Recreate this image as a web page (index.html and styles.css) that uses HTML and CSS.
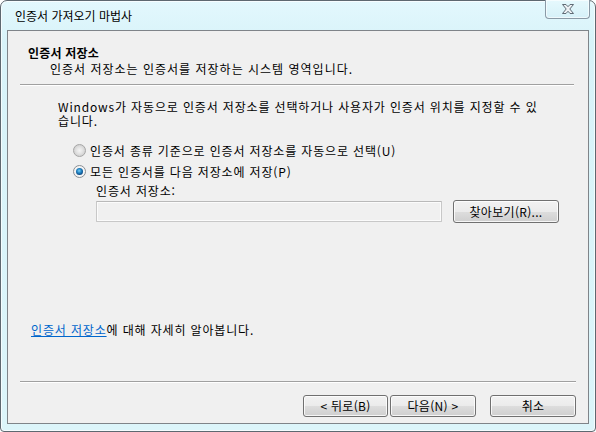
FILE: index.html
```html
<!DOCTYPE html>
<html lang="ko">
<head>
<meta charset="utf-8">
<link rel="stylesheet" href="styles.css">
</head>
<body>
<div class="window">
  <div class="titlebar">
    <span class="title">인증서 가져오기 마법사</span>
    <div class="close">
      <svg width="16" height="12" viewBox="0 0 16 12"><path d="M2.5 1.5h3.5l2 2.2 2-2.2h3.5l-3.7 4.5 3.7 4.5h-3.5l-2-2.2-2 2.2h-3.5l3.7-4.5z" fill="#eef2f5" stroke="#5f6b75" stroke-width="1" stroke-linejoin="round"/></svg>
    </div>
  </div>
  <div class="client">
    <div class="header">
      <div class="h-title">인증서 저장소</div>
      <div class="h-sub">인증서 저장소는 인증서를 저장하는 시스템 영역입니다.</div>
    </div>
    <div class="sep sep-top"></div>
    <div class="body">
      <p class="intro">Windows가 자동으로 인증서 저장소를 선택하거나 사용자가 인증서 위치를 지정할 수 있<br>습니다.</p>
      <div class="radios">
        <div class="radio-row"><span class="radio"></span><span>인증서 종류 기준으로 인증서 저장소를 자동으로 선택(U)</span></div>
        <div class="radio-row"><span class="radio checked"></span><span>모든 인증서를 다음 저장소에 저장(P)</span></div>
      </div>
      <div class="store-label">인증서 저장소:</div>
      <div class="store-row">
        <div class="textbox"></div>
        <div class="btn browse">찾아보기(R)...</div>
      </div>
      <div class="learn"><a class="link">인증서 저장소</a>에 대해 자세히 알아봅니다.</div>
    </div>
    <div class="sep sep-bottom"></div>
    <div class="footer">
      <div class="btn back">&lt; 뒤로(B)</div>
      <div class="btn next">다음(N) &gt;</div>
      <div class="btn cancel">취소</div>
    </div>
  </div>
</div>
</body>
</html>
```
FILE: styles.css
```css
html, body {
  margin: 0;
  padding: 0;
  background: #ffffff;
}
body {
  font-family: "Noto Sans CJK KR", "Noto Sans", sans-serif;
  font-size: 12px;
  color: #000;
}
.window {
  width: 596px;
  height: 432px;
  box-sizing: border-box;
  border: 1px solid #5e6870;
  border-radius: 7px 7px 4px 4px;
  background: linear-gradient(#e3f8fd, #d8f3f9 40px, #dcf5fa);
  box-shadow: inset 0 0 0 1px rgba(255,255,255,0.7);
  padding: 0 6px 7px 6px;
  display: flex;
  flex-direction: column;
}
.titlebar {
  height: 29px;
  display: flex;
  align-items: flex-start;
  flex-shrink: 0;
}
.title {
  margin-left: 8px;
  margin-top: 7px;
  line-height: 16px;
  color: #000;
}
.close {
  margin-left: auto;
  margin-top: -1px;
  margin-right: -1px;
  width: 45px;
  height: 19px;
  box-sizing: border-box;
  border: 1px solid #8a9aa6;
  border-top: none;
  border-radius: 0 0 4px 4px;
  background: linear-gradient(#e6f9fd, #d6f1f8);
  box-shadow: inset 0 0 0 1px rgba(255,255,255,0.6);
  display: flex;
  align-items: center;
  justify-content: center;
}
.close svg {
  display: block;
  margin-top: -1px;
}
.client {
  flex: 1;
  box-sizing: border-box;
  border: 1px solid #7f8489;
  background: #f0f0f0;
  display: flex;
  flex-direction: column;
  letter-spacing: 0.85px;
}
.header {
  padding: 14px 0 0 20px;
}
.h-title {
  font-weight: bold;
  line-height: 16px;
  letter-spacing: 0.2px;
}
.h-sub {
  line-height: 16px;
  padding-left: 22px;
  letter-spacing: 1px;
}
.sep {
  height: 0;
  border-top: 1px solid #a0a0a0;
  border-bottom: 1px solid #ffffff;
}
.sep-top {
  margin: 7px 14px 0 12px;
}
.sep-bottom {
  margin: 0 12px 0 12px;
}
.body {
  flex: 1;
  display: flex;
  flex-direction: column;
}
.intro {
  margin: 14px 0 0 50px;
  line-height: 14px;
}
.radios {
  margin: 12px 0 0 65px;
}
.radio-row {
  height: 21px;
  display: flex;
  align-items: center;
  gap: 4px;
}
.radio {
  width: 13px;
  height: 13px;
  box-sizing: border-box;
  border-radius: 50%;
  border: 1px solid #a5a5a5;
  background: radial-gradient(circle at 50% 50%, #f4f4f4 0, #e4e4e4 3px, #d6d6d6 5px);
  display: flex;
  align-items: center;
  justify-content: center;
}
.radio.checked {
  border-color: #8a8f94;
  background: #f4f4f4;
}
.radio.checked::after {
  content: "";
  width: 7px;
  height: 7px;
  border-radius: 50%;
  background: radial-gradient(circle at 45% 40%, #7fd0f5 0, #2489c8 2px, #0d4b86 4px);
}
.store-label {
  margin: 1px 0 0 88px;
  line-height: 16px;
}
.store-row {
  margin: 1px 0 0 88px;
  height: 23px;
  display: flex;
  align-items: center;
  gap: 11px;
}
.textbox {
  width: 346px;
  height: 21px;
  box-sizing: border-box;
  border: 1px solid #c8c8c8;
  border-top-color: #b9b9b9;
  background: #f0f0f0;
  box-shadow: inset 0 0 0 1px #fbfbfb;
  border-radius: 1px;
}
.btn {
  box-sizing: border-box;
  border: 1px solid #707070;
  border-radius: 3px;
  background: linear-gradient(#f2f2f2 0, #ebebeb 50%, #dddddd 51%, #cfcfcf 100%);
  box-shadow: inset 0 0 0 1px rgba(255,255,255,0.8);
  display: flex;
  align-items: center;
  justify-content: center;
  line-height: 14px;
  letter-spacing: 0.3px;
}
.browse {
  width: 106px;
  height: 23px;
}
.learn {
  margin: auto 0 43px 23px;
  line-height: 16px;
}
.link {
  color: #0066cc;
  text-decoration: underline;
}
.footer {
  height: 40px;
  box-sizing: border-box;
  padding: 12px 12px 0 0;
  display: flex;
  justify-content: flex-end;
  align-items: flex-start;
}
.footer .btn {
  width: 86px;
  height: 22px;
}
.footer .back {
  width: 85px;
  margin-right: 2px;
}
.footer .next {
  margin-right: 14px;
}
```
